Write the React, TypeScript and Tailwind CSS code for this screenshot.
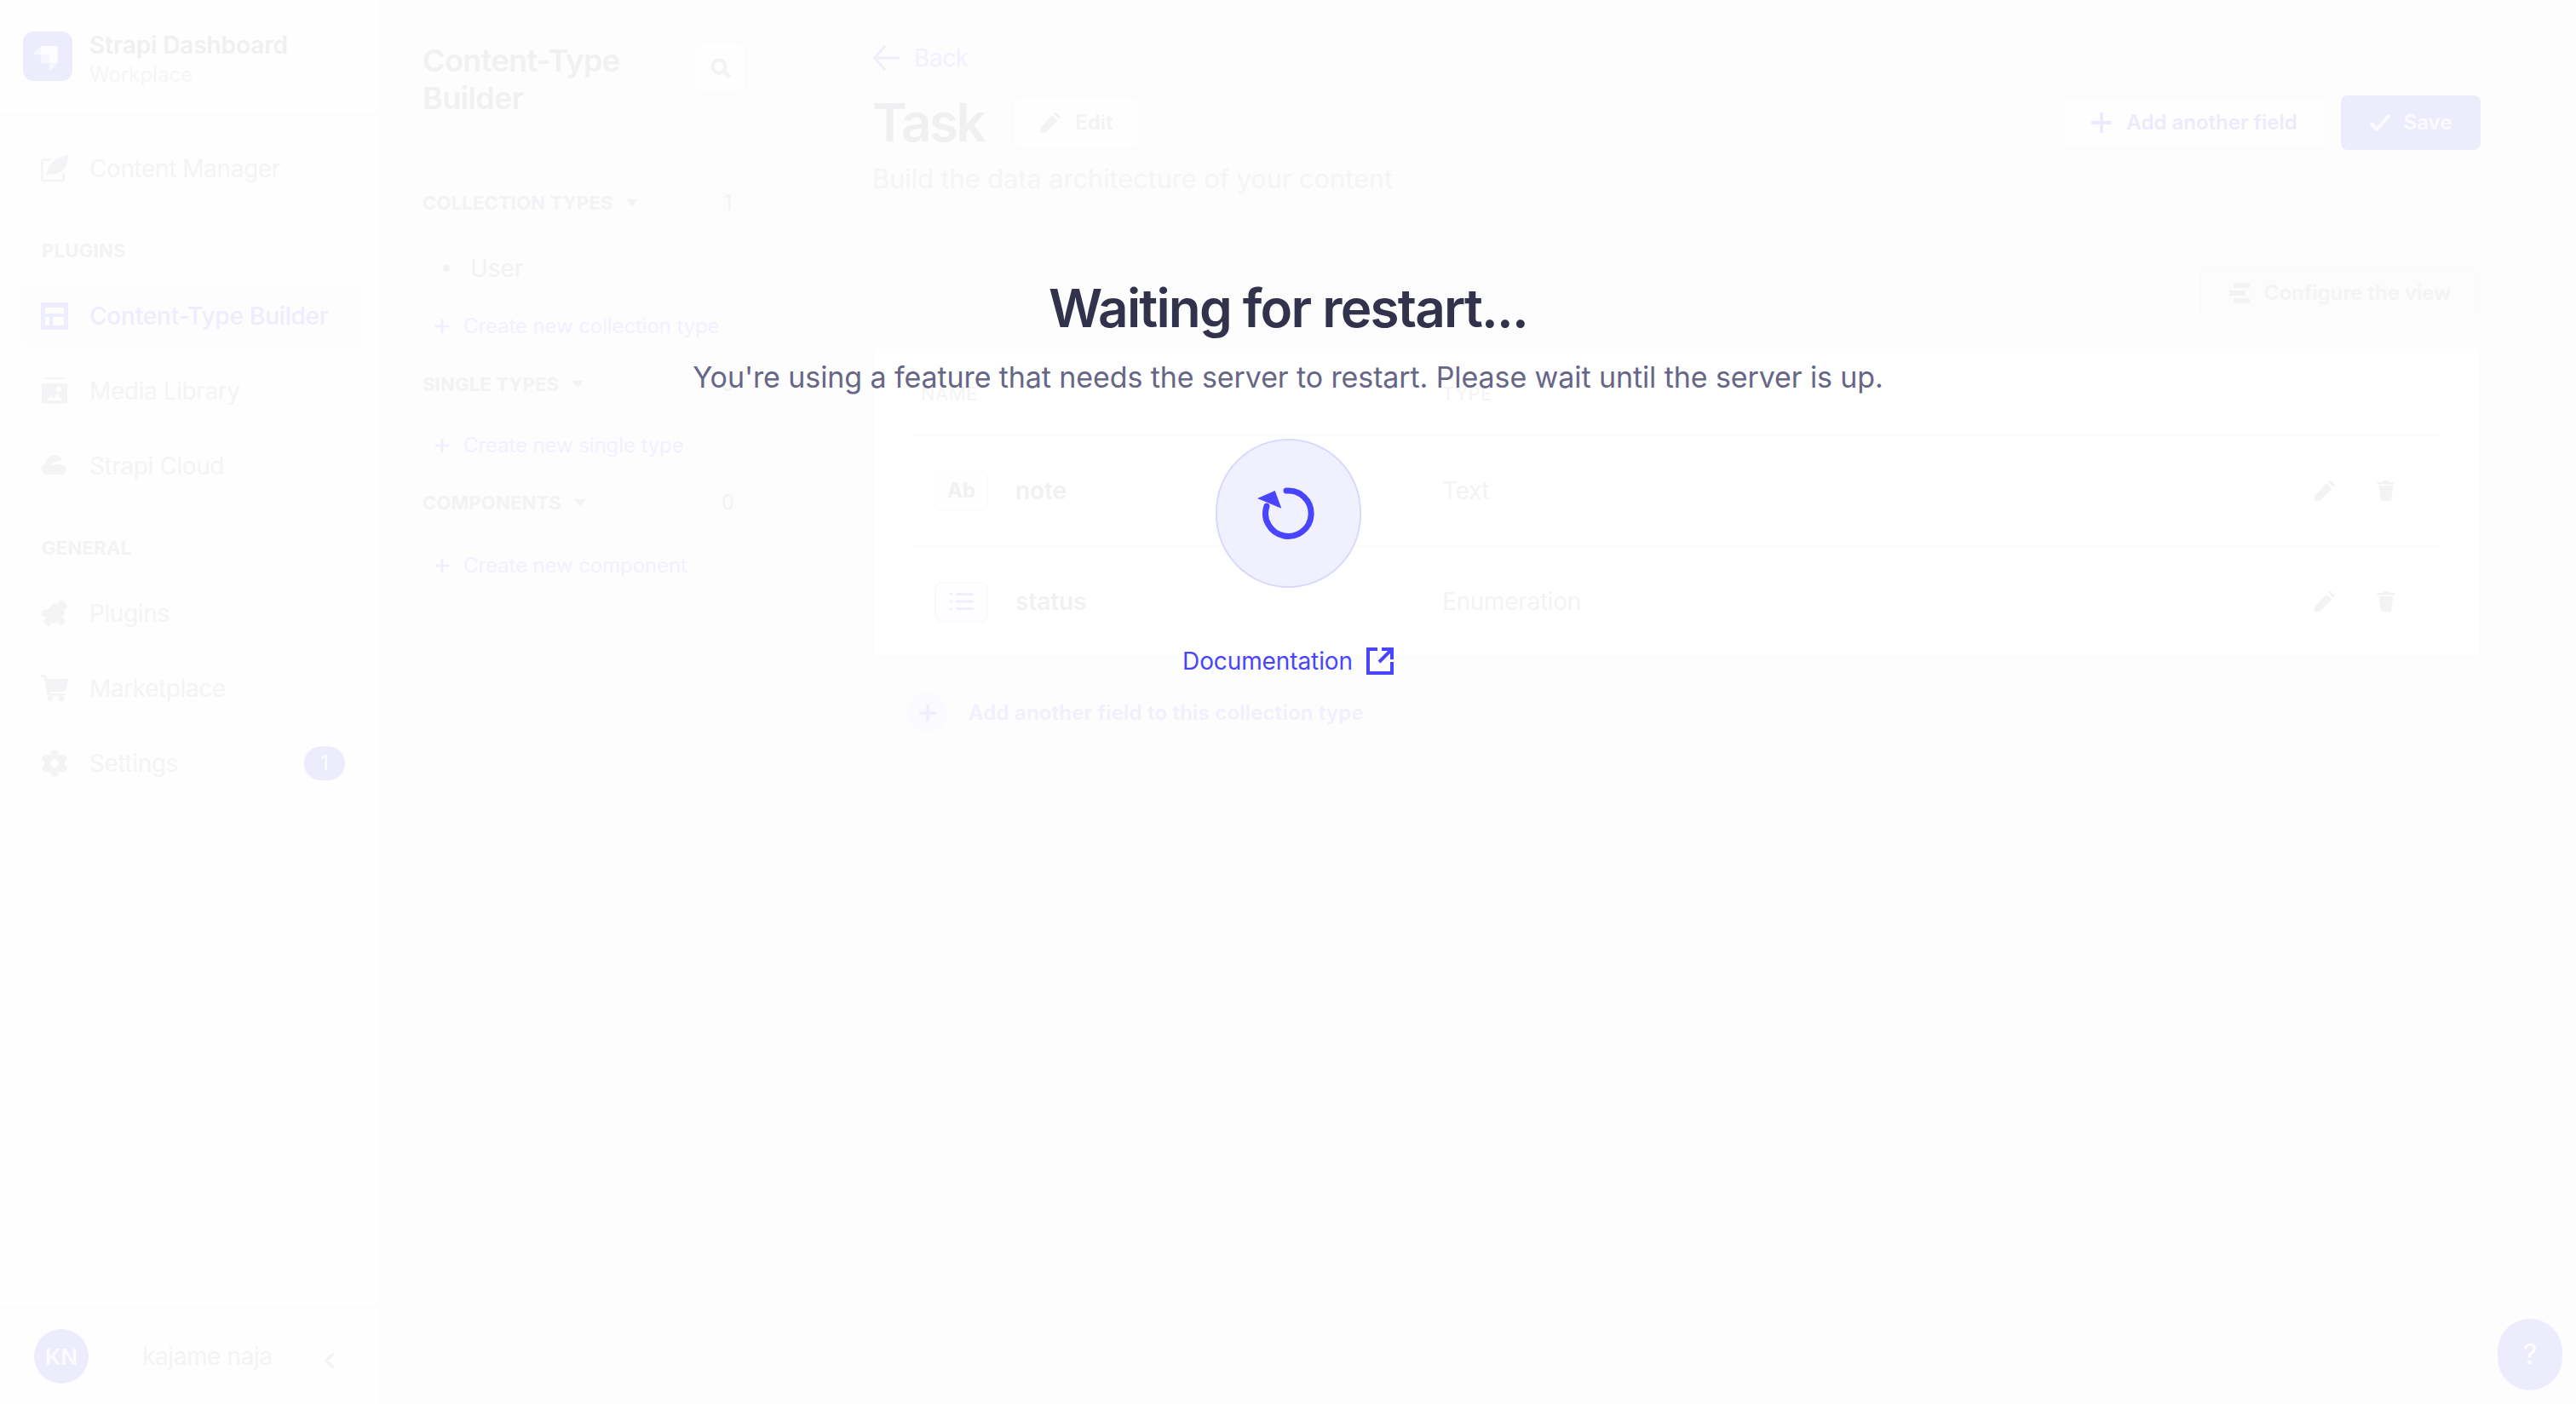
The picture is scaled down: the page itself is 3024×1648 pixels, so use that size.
import React from 'react';
import { FaCog } from 'react-icons/fa';

const Plus = ({ className }: { className: string }) => (
  <svg viewBox="0 0 24 24" className={className} fill="currentColor">
    <path d="M10 0h4v10h10v4H14v10h-4V14H0v-4h10z" />
  </svg>
);

const Pencil = ({ className }: { className: string }) => (
  <svg viewBox="0 0 24 24" className={className} fill="currentColor">
    <path d="M0 18.500 14 3.500l6.500 6L6 24H0zM16 1.500 17.500 0a1 1 0 0 1 1.400 0l4.800 4.600a1 1 0 0 1 0 1.400L22 7.600z" />
  </svg>
);

const Trash = ({ className }: { className: string }) => (
  <svg viewBox="0 0 20 24" className={className} fill="currentColor">
    <path d="M7 0h6l1 2h6v2.500H0V2h6zM1.500 6h17L16 24H4z" />
  </svg>
);

const Caret = ({ className }: { className: string }) => (
  <svg viewBox="0 0 14 8" className={className} fill="currentColor">
    <path d="M0 0h14L7 8z" />
  </svg>
);

const FeatherIcon = () => (
  <svg viewBox="0 0 32 32" className="w-8 h-8 text-[#f4f4f6]" fill="none">
    <path d="M12 5.500H2.500a1 1 0 0 0-1 1V29a1 1 0 0 0 1 1h23a1 1 0 0 0 1-1v-8" stroke="currentColor" strokeWidth="2.500" />
    <path d="M6 24C8 12 16 2 32 0c0 10-3 20-15 22-4 1-8 0-11 2z" fill="currentColor" />
  </svg>
);

const LayoutIcon = () => (
  <svg viewBox="0 0 32 32" className="w-8 h-8 text-[#eeedfd]">
    <path fill="currentColor" fillRule="evenodd" d="M1 0h30a1 1 0 0 1 1 1v30a1 1 0 0 1-1 1H1a1 1 0 0 1-1-1V1a1 1 0 0 1 1-1zM5 6v7h22V6zm0 11v10h5V17zm9 0v10h13V17z" />
  </svg>
);

const MediaIcon = () => (
  <svg viewBox="0 0 32 32" className="w-8 h-8 text-[#f4f4f6]">
    <path fill="currentColor" fillRule="evenodd" d="M4 0h24v2.500H4zM2 7h28a1 1 0 0 1 1 1v22a1 1 0 0 1-1 1H2a1 1 0 0 1-1-1V8a1 1 0 0 1 1-1zm4 20h20l-6.500-7.500-4.500 5-3-3zM21 11a3 3 0 1 0 0 6 3 3 0 0 0 0-6z" />
  </svg>
);

const CloudIcon = () => (
  <svg viewBox="0 0 32 32" className="w-8 h-8 text-[#f4f4f6]">
    <path fill="currentColor" fillRule="evenodd" d="M7 26a6.500 6.500 0 0 1-1.500-12.800C6 8 10 3.500 16 3.500c4.500 0 8 2.500 9 6.500l-6 .5c-4 .5-6 3-6.500 5.500 2-1.500 5-2.200 8-1.800 3-.4 5.500.3 7 1.300A6 6 0 0 1 25 26z" />
  </svg>
);

const PuzzleIcon = () => (
  <svg viewBox="0 0 32 32" className="w-8 h-8 text-[#f4f4f6]" fill="currentColor">
    <rect x="7" y="7" width="18" height="18" rx="2" transform="rotate(45 16 16)" />
    <rect x="19" y="2" width="11" height="11" rx="3" transform="rotate(45 24.500 7.500)" />
    <circle cx="5" cy="16" r="4.500" />
    <rect x="4" y="21" width="9" height="9" rx="3" transform="rotate(45 8.500 25.500)" />
    <circle cx="24" cy="25" r="4.500" />
  </svg>
);

const CartIcon = () => (
  <svg viewBox="0 0 32 32" className="w-8 h-8 text-[#f4f4f6]">
    <path fill="currentColor" d="M0 0h4c1.500 0 2.500 1 3 2.500L7.500 5H32l-2 12c-.3 1.500-1.500 3-3.500 3H10.500l.5 2h18v2.500H9c-1 0-1.800-.8-2-2L4 3H0z" />
    <circle cx="11" cy="28" r="3.500" fill="currentColor" />
    <circle cx="24" cy="28" r="3.500" fill="currentColor" />
  </svg>
);

const navBase = 'flex items-center h-[70px] rounded-lg pl-6 pr-6 gap-[25px]';

const NavItem = ({ icon, label, active, badge }: { icon: React.ReactNode; label: string; active?: boolean; badge?: string }) => (
  <div className={active ? navBase + ' bg-[#fdfdfe] font-medium' : navBase}>
    {icon}
    <span className={active ? 'text-[28px] tracking-[-0.2px] text-[#eeedfd]' : 'text-[28px] tracking-[-0.4px] text-[#f4f4f6]'}>{label}</span>
    {badge && (
      <span className="ml-auto w-12 h-10 rounded-[20px] bg-[#edecfd] text-[#fdfdff] text-[24px] flex items-center justify-center">{badge}</span>
    )}
  </div>
);

const SideLabel = ({ children }: { children: string }) => (
  <div className="mt-12 mb-[29px] h-[26px] pl-[25px] flex items-center text-[22px] font-bold tracking-[0.3px] text-[#f3f3f5]">{children}</div>
);

const Sidebar = () => (
  <aside className="w-[447px] shrink-0 h-full flex flex-col bg-[#fefefe] border-r-2 border-[#fcfcfc]">
    <div className="h-[136px] shrink-0 flex items-start gap-5 pl-[27px] pt-[37px] border-b-2 border-[#fcfcfc]">
      <svg viewBox="0 0 58 58" className="w-[58px] h-[58px]">
        <rect width="58" height="58" rx="12" fill="#edecfd" />
        <path fill="#fdfdff" d="M21 17h19.700v20.300h-10v-10H21z" />
        <path fill="#f6f6fe" d="M11 27.300 21 17v10.300zM21 27.300h9.700v10H21zM30.700 37.300h10l-10 9.400z" />
      </svg>
      <div className="flex flex-col">
        <span className="text-[28px] leading-[32px] font-semibold tracking-[-0.1px] text-[#f0f0f2]">Strapi Dashboard</span>
        <span className="text-[24px] leading-[36px] mt-[1px] text-[#f6f6f7]">Workplace</span>
      </div>
    </div>

    <nav className="flex-1 flex flex-col pl-6 pr-4 pt-[27px]">
      <NavItem icon={<FeatherIcon />} label="Content Manager" />
      <SideLabel>PLUGINS</SideLabel>
      <div className="flex flex-col gap-[18px]">
        <NavItem icon={<LayoutIcon />} label="Content-Type Builder" active />
        <NavItem icon={<MediaIcon />} label="Media Library" />
        <NavItem icon={<CloudIcon />} label="Strapi Cloud" />
      </div>
      <SideLabel>GENERAL</SideLabel>
      <div className="flex flex-col gap-[18px]">
        <NavItem icon={<PuzzleIcon />} label="Plugins" />
        <NavItem icon={<CartIcon />} label="Marketplace" />
        <NavItem icon={<FaCog className="w-8 h-8 text-[#f4f4f6]" />} label="Settings" badge="1" />
      </div>
    </nav>

    <div className="h-[114px] shrink-0 border-t-2 border-[#fcfcfc] flex items-center pl-10">
      <span className="w-16 h-16 rounded-full bg-[#edecfd] text-[#fbfbff] text-[26px] font-semibold flex items-center justify-center">KN</span>
      <span className="ml-[63px] text-[28px] tracking-[-0.4px] text-[#f4f4f6]">kajame naja</span>
      <span className="ml-auto mr-[41px] mt-[10px] w-[34px] h-12 rounded-lg border-2 border-[#fdfdfd] flex items-center justify-center">
        <svg viewBox="0 0 12 18" className="w-3 h-[18px] text-[#f3f3f5]" fill="none" stroke="currentColor" strokeWidth="3">
          <path d="M10.500 1 2 9l8.500 8" />
        </svg>
      </span>
    </div>
  </aside>
);

const CreateLink = ({ label, className }: { label: string; className: string }) => (
  <div className={'flex items-center h-10 pl-[15px] gap-[17px] text-[24px] tracking-[-0.1px] text-[#f2f1fe] ' + className}>
    <Plus className="w-4 h-4 text-[#efeefd]" />
    <span>{label}</span>
  </div>
);

const SectionHead = ({ label, count, className }: { label: string; count: string; className: string }) => (
  <div className={'flex items-center justify-between h-[46px] ' + className}>
    <div className="flex items-center gap-[15px] text-[22px] font-bold tracking-[0.2px] text-[#f3f3f5]">
      <span>{label}</span>
      <Caret className="w-[14px] h-2 text-[#f3f3f5]" />
    </div>
    <span className="w-[43px] h-[46px] rounded-lg bg-[#fcfcfc] text-[24px] text-[#f3f3f5] flex items-center justify-center">{count}</span>
  </div>
);

const TypesPanel = () => (
  <section className="w-[464px] shrink-0 h-full bg-[#fdfdfd] border-r-2 border-[#fcfcfc] pl-[49px] pr-[33px] pt-[49px]">
    <div className="flex justify-between items-start">
      <h2 className="text-[36px] leading-[44px] font-semibold tracking-[-0.6px] text-[#f1f1f3]">Content-Type<br />Builder</h2>
      <span className="w-[61px] h-[61px] rounded-lg bg-[#fefefe] border-2 border-[#fcfcfc] flex items-center justify-center">
        <svg viewBox="0 0 24 24" className="w-6 h-6 text-[#f3f3f5]" fill="none" stroke="currentColor">
          <circle cx="10" cy="10" r="7.500" strokeWidth="4" />
          <path d="m15.500 15.500 7 7" strokeWidth="4.500" />
        </svg>
      </span>
    </div>
    <div className="w-[46px] h-[2px] mt-[32px] bg-[#fbfbfb]" />

    <SectionHead label="COLLECTION TYPES" count="1" className="mt-[44px]" />
    <div className="flex items-center h-10 mt-[34px] pl-6 gap-6 text-[28px] text-[#f2f2f4]">
      <span className="w-2 h-2 rounded-full bg-[#f2f2f4]" />
      <span>User</span>
    </div>
    <CreateLink label="Create new collection type" className="mt-[28px]" />

    <SectionHead label="SINGLE TYPES" count="0" className="mt-[25px]" />
    <CreateLink label="Create new single type" className="mt-[29px]" />

    <SectionHead label="COMPONENTS" count="0" className="mt-[24px]" />
    <CreateLink label="Create new component" className="mt-[31px]" />
  </section>
);

const OutlineButton = ({ icon, label, className }: { icon: React.ReactNode; label: string; className: string }) => (
  <span className={'h-[62px] flex items-center justify-center gap-[17px] rounded-lg border-2 text-[24px] font-semibold ' + className}>
    {icon}
    {label}
  </span>
);

const FieldRow = ({ badge, name, type }: { badge: React.ReactNode; name: string; type: string }) => (
  <div className="h-[130px] mx-[45px] border-t-2 border-[#fcfcfc] grid grid-cols-[622px_1fr_auto] items-center">
    <div className="flex items-center pl-[26px] gap-8">
      {badge}
      <span className="text-[28px] font-semibold tracking-[-0.1px] text-[#f1f1f3]">{name}</span>
    </div>
    <span className="text-[28px] tracking-[-0.3px] text-[#f3f3f5]">{type}</span>
    <div className="flex items-center gap-[50px] pr-[54px]">
      <Pencil className="w-6 h-6 text-[#f3f3f5]" />
      <Trash className="w-5 h-6 text-[#f3f3f5]" />
    </div>
  </div>
);

const MainPane = () => (
  <main className="flex-1 h-full bg-[#fdfdfd] pl-[113px] pr-[112px] pt-12">
    <div className="flex items-center h-10 gap-[17px] text-[28px] tracking-[-0.4px] text-[#f2f1fe]">
      <svg viewBox="0 0 32 32" className="w-8 h-8 text-[#efeefd]" fill="none" stroke="currentColor" strokeWidth="3">
        <path d="M15 2 2.500 16 15 30M3 16h29" />
      </svg>
      <span>Back</span>
    </div>

    <div className="flex items-center justify-between h-16 mt-6">
      <div className="flex items-center gap-[33px]">
        <h1 className="text-[62px] leading-[64px] font-semibold tracking-[-2.500px] text-[#f0f0f2]">Task</h1>
        <OutlineButton
          icon={<Pencil className="w-6 h-6 text-[#f3f3f5]" />}
          label="Edit"
          className="w-[151px] bg-[#fefefe] border-[#fcfcfc] text-[#f3f3f5]"
        />
      </div>
      <div className="flex items-center gap-[17px]">
        <OutlineButton
          icon={<Plus className="w-6 h-6 text-[#ecebfb]" />}
          label="Add another field"
          className="w-[310px] bg-[#fefefe] border-[#fbfbff] text-[#ecebfb]"
        />
        <span className="w-[164px] h-16 rounded-lg bg-[#edecfd] flex items-center justify-center gap-[16px] text-[24px] font-semibold text-[#fbfbff]">
          <svg viewBox="0 0 24 24" className="w-6 h-6" fill="none" stroke="currentColor" strokeWidth="4">
            <path d="m1 12 7 8L23 3" />
          </svg>
          Save
        </span>
      </div>
    </div>

    <p className="mt-3 text-[31px] leading-[44px] tracking-[-0.15px] text-[#f5f5f6]">Build the data architecture of your content</p>

    <div className="flex justify-end mt-[80px]">
      <OutlineButton
        icon={
          <svg viewBox="0 0 24 24" className="w-6 h-6 text-[#f3f3f5]" fill="currentColor">
            <path d="M5 0h19v6H5zM0 9h19v6H0zM5 18h19v6H5z" />
          </svg>
        }
        label="Configure the view"
        className="w-[330px] h-[63px] bg-[#fcfcfc] border-[#fbfbfb] text-[#f4f4f6]"
      />
    </div>

    <div className="mt-8 rounded-lg bg-[#ffffff] border-2 border-[#fdfdfd]">
      <div className="h-[101px] pt-[37px] pl-[55px] grid grid-cols-[612px_1fr] text-[22px] text-[#f4f4f6] tracking-[0.5px]">
        <span>NAME</span>
        <span>TYPE</span>
      </div>
      <FieldRow
        name="note"
        type="Text"
        badge={
          <span className="w-[63px] h-[47px] rounded-lg bg-[#fdfefd] border-2 border-[#fbfcfb] text-[24px] font-bold text-[#f0f2f0] flex items-center justify-center">Ab</span>
        }
      />
      <FieldRow
        name="status"
        type="Enumeration"
        badge={
          <span className="w-[63px] h-[47px] rounded-lg bg-[#fefdff] border-2 border-[#fbf8fe] flex items-center justify-center">
            <svg viewBox="0 0 28 22" className="w-7 h-[22px] text-[#f4eefc]" fill="currentColor">
              <path d="M0 1h3v3H0zM7 1h21v3H7zM0 9.500h3v3H0zM7 9.500h21v3H7zM0 18h3v3H0zM7 18h21v3H7z" />
            </svg>
          </span>
        }
      />
      <div className="border-t-2 border-[#fcfcfc] bg-[#fdfdfd] pt-[41px] pb-[44px] pl-[39px] flex items-center gap-[25px] rounded-b-lg">
        <span className="w-[47px] h-[47px] rounded-full bg-[#fbfaff] flex items-center justify-center">
          <Plus className="w-5 h-5 text-[#efeefd]" />
        </span>
        <span className="text-[24px] font-semibold tracking-[0.2px] text-[#f1f0fe]">Add another field to this collection type</span>
      </div>
    </div>
  </main>
);

const RestartOverlay = () => (
  <div className="absolute inset-0 z-10 flex flex-col items-center pt-[322px]">
    <h1 className="text-[62px] leading-[80px] font-semibold tracking-[-1.800px] text-[#32324d]">Waiting for restart...</h1>
    <p className="mt-[19px] text-[34px] leading-[44px] tracking-[-0.1px] text-[#666687]">You're using a feature that needs the server to restart. Please wait until the server is up.</p>
    <div className="mt-[50px] w-[171px] h-[175px] rounded-full bg-[#f0f0ff] border-2 border-[#d9d8ff] flex items-center justify-center">
      <svg viewBox="0 0 72 72" className="w-[72px] h-[72px]" fill="none">
        <path d="M34 9a26.800 26.800 0 1 1-23 18" stroke="#4945ff" strokeWidth="7" strokeLinecap="round" />
        <path d="M0 18 20.700 9l7.600 20.700z" fill="#4945ff" />
      </svg>
    </div>
    <div className="mt-[69px] flex items-center gap-4 text-[28px] leading-[34px] tracking-[-0.1px] text-[#4945ff]">
      <span>Documentation</span>
      <svg viewBox="0 0 32 32" className="w-8 h-8" fill="none" stroke="#4945ff" strokeWidth="4">
        <path d="M13 2H2v28h28V17M18 2h12v12M15 17 29 3" />
      </svg>
    </div>
  </div>
);

export default function App() {
  return (
    <div className="relative w-screen h-screen overflow-hidden flex bg-white font-['Inter',sans-serif]">
      <Sidebar />
      <TypesPanel />
      <MainPane />
      <RestartOverlay />
      <span className="absolute z-10 left-[2932px] top-[1548px] w-[76px] h-[84px] rounded-full bg-[#edecfd] text-[#fdfdff] text-[32px] flex items-center justify-center">?</span>
    </div>
  );
}
